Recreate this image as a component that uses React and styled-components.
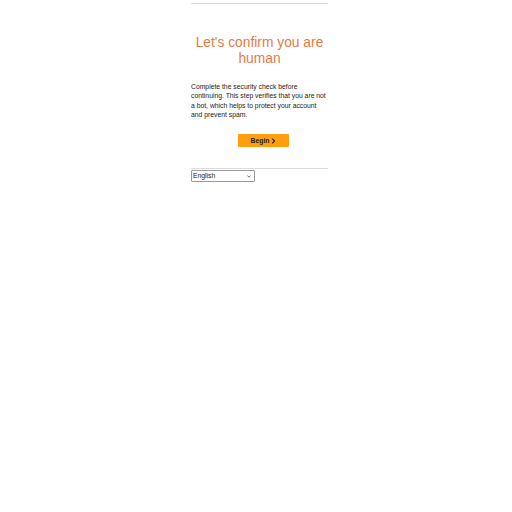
import styled, { createGlobalStyle } from "styled-components";

const GlobalStyle = createGlobalStyle`
  html, body {
    margin: 0;
    padding: 0;
    background: #fff;
  }
  body {
    font-family: "Liberation Sans", Arial, sans-serif;
    color: #222;
  }
`;

const Page = styled.div`
  padding-left: 7px;
`;

const Container = styled.div`
  width: 137px;
  margin: 0 auto;
  padding-top: 3px;
`;

const Rule = styled.div`
  border-top: 1px solid #dcdcdc;
`;

const Title = styled.h1`
  margin: 31px 0 0;
  font-size: 13.8px;
  line-height: 15.5px;
  font-weight: 400;
  text-align: center;
  color: #e37a42;
`;

const Text = styled.p`
  margin: 16px 0 0;
  font-size: 6.8px;
  line-height: 9.3px;
  color: #222;
`;

const ButtonRow = styled.div`
  display: flex;
  justify-content: center;
  padding-left: 8px;
  margin-top: 15px;
`;

const Button = styled.button`
  display: flex;
  align-items: center;
  justify-content: center;
  gap: 2px;
  width: 51px;
  height: 13px;
  padding: 0;
  border: none;
  border-radius: 1px;
  background: #ff9f0d;
  color: #222;
  font-family: "Liberation Sans", Arial, sans-serif;
  font-size: 6.8px;
  font-weight: 700;
  cursor: pointer;
`;

const Footer = styled.div`
  margin-top: 21px;
  border-top: 1px solid #dcdcdc;
`;

const SelectWrap = styled.div`
  position: relative;
  width: 64px;
  margin-top: 1px;
`;

const Select = styled.select`
  display: block;
  appearance: none;
  width: 64px;
  height: 12px;
  padding: 0 1px;
  font-family: "Liberation Sans", Arial, sans-serif;
  font-size: 6.8px;
  line-height: 10px;
  border: 1px solid #9a9a9a;
  border-radius: 1px;
  background: #fff;
  color: #222;
`;

const Arrow = styled.svg`
  position: absolute;
  right: 4px;
  top: 5px;
  pointer-events: none;
`;

export default function App() {
  return (
    <>
      <GlobalStyle />
      <Page>
        <Container>
          <Rule />
          <Title>Let's confirm you are human</Title>
          <Text>
            Complete the security check before continuing. This step verifies
            that you are not a bot, which helps to protect your account and
            prevent spam.
          </Text>
          <ButtonRow>
            <Button>
              Begin
              <svg width="5" height="6" viewBox="0 0 5 6">
                <path d="M1.2 0.6 L3.6 3 L1.2 5.4" fill="none" stroke="#222" strokeWidth="1.1" />
              </svg>
            </Button>
          </ButtonRow>
          <Footer>
            <SelectWrap>
              <Select defaultValue="en">
                <option value="en">English</option>
              </Select>
              <Arrow width="4" height="3" viewBox="0 0 4 3">
                <path d="M0.4 0.5 L2 2.2 L3.6 0.5" fill="none" stroke="#444" strokeWidth="0.8" />
              </Arrow>
            </SelectWrap>
          </Footer>
        </Container>
      </Page>
    </>
  );
}
